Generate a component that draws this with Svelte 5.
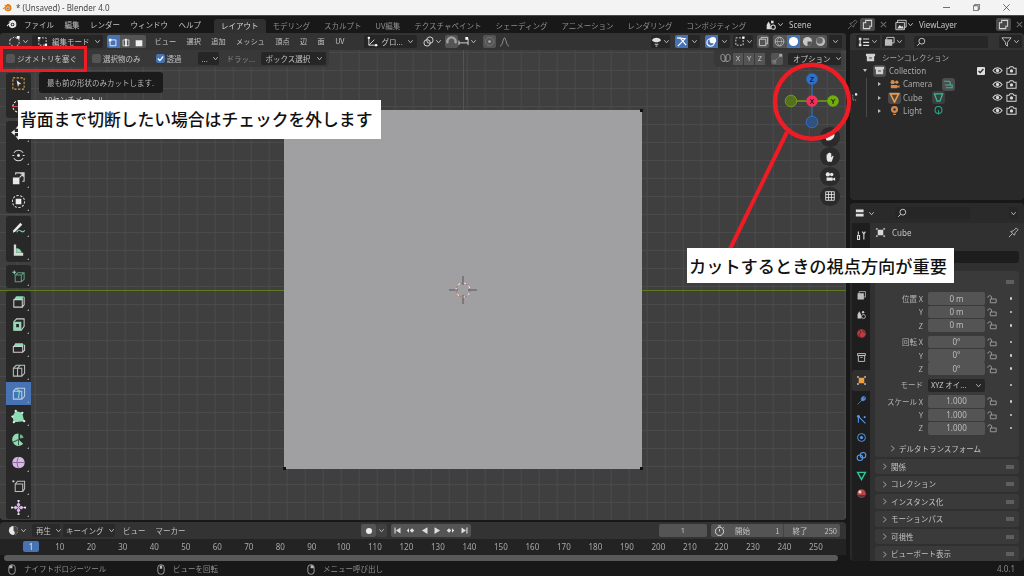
<script>
    const menus = ["ファイル", "編集", "レンダー", "ウィンドウ", "ヘルプ"];
    const tabs = ["レイアウト", "モデリング", "スカルプト", "UV編集", "テクスチャペイント", "シェーディング", "アニメーション", "レンダリング", "コンポジティング"];
    const viewMenus = ["ビュー", "選択", "追加", "メッシュ", "頂点", "辺", "面", "UV"];
    const mint = "#8fdcb4";
    const lilac = "#d9b8e6";

    // each tool is a few shapes on a 16x16 box
    const toolGroups = [
        [
            { shapes: [{ d: "M2 2h12v12H2z", s: "#d9a441", dash: true }, { d: "M6 4.500l5 4-2.500.3L7.500 12z", f: "#e8e8e8" }] },
            { shapes: [{ d: "M8 2a6 6 0 1 1-.01 0z", s: "#e8e8e8", dash: true }, { d: "M8 1v14M1 8h14", s: "#e24b4b" }] }
        ],
        [
            { shapes: [{ d: "M1 8h14M8 1v14M1 8l2.500-2v4zM15 8l-2.500-2v4zM8 1L6 3.500h4zM8 15l-2-2.500h4z", s: "#e8e8e8" }] },
            { shapes: [{ d: "M3 5a6 6 0 0 1 10 0M13 11a6 6 0 0 1-10 0", s: "#d0d0d0" }, { d: "M6.500 8a1.500 1.500 0 1 0 3 0 1.500 1.500 0 1 0-3 0", f: "#e8e8e8" }, { d: "M1.500 8h2M12.500 8h2", s: "#e8e8e8" }] },
            { shapes: [{ d: "M2 7h7v7H2z", f: "#e8e8e8" }, { d: "M5 4V2h9v9h-2M9 7l4-4M10 3h3v3", s: "#d0d0d0" }] },
            { shapes: [{ d: "M8 1.500a6.500 6.500 0 1 0 .01 0z", s: "#cfcfcf", dash: true }, { d: "M5 5h6v6H5z", f: "#eeeeee" }] }
        ],
        [
            { shapes: [{ d: "M2.500 11L10 3l2 2-7.500 7.500-2.500 1z", f: "#e8e8e8" }, { d: "M6 13c2-3 3.500-2 5-1s2.500 1 3.500-1", s: mint }] },
            { shapes: [{ d: "M3 1.500h2.500v9H13v3H3z", f: "#d8d8d8" }, { d: "M5.500 5.500a6 6 0 0 1 6 5h-6z", f: mint }] }
        ],
        [{ shapes: [{ d: "M1.500 3.500h4M3.500 1.500v4", s: mint }, { d: "M4.500 6.500l3-2.500h6.500v7l-3 2.500H4.500zM4.500 6.500h6.500v7M11 6.500l3-2.500", s: "#5f9c80" }] }],
        [
            { shapes: [{ d: "M3 6l2.500-3.500h8L12 6z", f: mint }, { d: "M3 6h9v8H3z", s: "#d0d0d0" }, { d: "M12 14l2-2.500V3", s: "#d0d0d0" }] },
            { shapes: [{ d: "M3 5l3-3h8v8l-3 4H3z", s: "#d0d0d0" }, { d: "M3 5h8v9H3z", f: mint }, { d: "M5.500 7.500h3v3.500h-3z", f: "#2b2b2b" }] },
            { shapes: [{ d: "M2.500 7l2-3.500h8l1 1.500-1 2.500z", f: mint }, { d: "M2.500 7h10v6h-10zM12.500 13l2-2V5", s: "#d0d0d0" }] },
            { shapes: [{ d: "M2.500 5.500h9v8.500h-9zM2.500 5.500l3-3h9v8.500l-3 3", s: "#bdbdbd" }, { d: "M7 5.500v8.500M7 5.500l3-3", s: mint }] },
            { active: true, shapes: [{ d: "M2.500 5.500h9v8.500h-9zM2.500 5.500l3-3h9v8.500l-3 3", s: "#b9cde8" }, { d: "M6 3.500l3 1.500-1 8", s: "#7fe6c0" }] },
            { shapes: [{ d: "M5 2l7 2 2 9-11 1-1.500-6z", f: mint }, { d: "M5 2h.1M12 4h.1M14 13h.1M3 14h.1M1.500 8h.1", s: "#e8e8e8", wide: true }] },
            { shapes: [{ d: "M8 8V1.500a6.500 6.500 0 0 0-6 9.500 6.500 6.500 0 0 0 11 1.500z", f: mint }, { d: "M9.500 2.500a5 5 0 0 1 4 3.500l-4 1z", f: "#6fb592" }, { d: "M8 8L2 11M8 8v6", s: "#3b5c4c" }] },
            { shapes: [{ d: "M8 2c4 0 6.500 2 6.500 6s-2.500 6-6.500 6-6.500-2-6.500-6S4 2 8 2z", f: lilac }, { d: "M1.500 8h13M8 2c-2 4-2 8 0 12", s: "#8e6f9c" }] },
            { shapes: [{ d: "M4.500 6.500h8v8h-8zM4.500 6.500l2.500-3h7.500v8l-2 3", s: "#bdbdbd" }, { d: "M2.500 3.500h.1", s: lilac, wide: true }] },
            { shapes: [{ d: "M8 2l2 3-2 3 2 3-2 3-2-3 2-3-2-3zM2 8l3-2 3 2 3-2 3 2-3 2-3-2-3 2z", f: lilac }, { d: "M8 1h.1M8 15h.1M1 8h.1M15 8h.1", s: "#e8e8e8", wide: true }] }
        ]
    ];

    const ruler = [10, 20, 30, 40, 50, 60, 70, 80, 90, 100, 110, 120, 130, 140, 150, 160, 170, 180, 190, 200, 210, 220, 230, 240, 250];
    const frameX = (f) => 31.5 + (f - 1) * 3.15;

    const transformGroups = [
        [["位置 X", "0 m"], ["Y", "0 m"], ["Z", "0 m"]],
        [["回転 X", "0°"], ["Y", "0°"], ["Z", "0°"]]
    ];
    const scaleRows = [["スケール X", "1.000"], ["Y", "1.000"], ["Z", "1.000"]];
    const closedPanels = ["関係", "コレクション", "インスタンス化", "モーションパス", "可視性", "ビューポート表示"];
</script>

{#snippet chev()}
    <svg class="chev" viewBox="0 0 8 8"><path d="M1.500 2.500L4 5.500l2.500-3" fill="none" stroke="currentColor" stroke-width="1.100" /></svg>
{/snippet}
{#snippet eye()}
    <svg class="rowicon" viewBox="0 0 12 12"><path d="M1 6c2.500-4 7.500-4 10 0-2.500 4-7.500 4-10 0z" fill="none" stroke="#d8d8d8" stroke-width="1.100" /><circle cx="6" cy="6" r="1.800" fill="#d8d8d8" /></svg>
{/snippet}
{#snippet cam()}
    <svg class="rowicon" viewBox="0 0 12 12"><path d="M1 3.500h2.500l1-1.500h3l1 1.500H11V10H1z" fill="none" stroke="#d8d8d8" stroke-width="1.100" /><circle cx="6" cy="6.500" r="1.800" fill="#d8d8d8" /></svg>
{/snippet}
{#snippet lock()}
    <svg class="lock" viewBox="0 0 12 12"><path d="M1 4.500a2.300 2.300 0 0 1 4.500-.8V6" fill="none" stroke="#a8a8a8" /><path d="M4 6h7v4.500H4z" fill="none" stroke="#a8a8a8" /></svg>
{/snippet}
{#snippet outlinerIcon()}
    <svg class="ico14" viewBox="0 0 14 14"><path d="M1 2h3v3H1zM1 9h3v3H1z" fill="#e0e0e0" /><path d="M2.500 5v5.500M6 3.500h7M6 7.500h7M6 11h7" stroke="#e0e0e0" fill="none" stroke-width="1.300" /></svg>
{/snippet}
{#snippet copyIcon()}
    <svg class="ico12" viewBox="0 0 12 12"><path d="M4 1.500h6.500V8H8.500V10.500H1.500V4H4z" fill="none" stroke="#d8d8d8" stroke-width="1.100" /></svg>
{/snippet}
{#snippet crossIcon()}
    <svg class="ico10" viewBox="0 0 10 10"><path d="M2 2l6 6M8 2l-6 6" stroke="#6a6a6a" stroke-width="1.200" /></svg>
{/snippet}

<div class="screen">
    <div class="titlebar">
        <svg class="logo-small" viewBox="0 0 16 16"><path d="M1 9l5-4-3-.2 6-3.300c3-.5 6 2 6 5.500a5.500 5.500 0 0 1-11 1.500L2 10z" fill="#e87d0d" /><circle cx="9.500" cy="8" r="2.500" fill="#fff" /><circle cx="9.500" cy="8" r="1.400" fill="#265787" /></svg>
        <span class="wintitle">* (Unsaved) - Blender 4.0</span>
        <div class="winbtns">
            <svg viewBox="0 0 10 10"><path d="M0 5h10" stroke="#333" /></svg>
            <svg viewBox="0 0 10 10"><path d="M.5 2.500h7v7h-7zM2.500 2.500v-2h7v7h-2" fill="none" stroke="#333" /></svg>
            <svg viewBox="0 0 10 10"><path d="M.5 .5l9 9M9.500 .5l-9 9" stroke="#333" /></svg>
        </div>
    </div>

    <div class="topbar">
        <svg class="logo" viewBox="0 0 16 16"><path d="M1 9.500l5-4.500-3-.1 6-3.400c3-.5 6 2 6 5.500a5.500 5.500 0 0 1-11 1.500L2 11z" fill="#e8e8e8" /><circle cx="9.500" cy="8" r="2.600" fill="#181818" /><circle cx="9.500" cy="8" r="1.400" fill="#e8e8e8" /></svg>
        <div class="menus">
            {#each menus as m}<span>{m}</span>{/each}
        </div>
        <div class="tabs">
            {#each tabs as t, i}<span class="tab" class:on={i === 0}>{t}</span>{/each}
        </div>
        <div class="scene">
            <svg class="ico14" viewBox="0 0 14 14"><path d="M2 12V7l2-4 2 3 1 6z" fill="#dcdcdc" /><circle cx="9.500" cy="9.500" r="2.500" fill="none" stroke="#dcdcdc" stroke-width="1.200" /><path d="M7 2h3v3H7z" fill="#dcdcdc" /></svg>
            {@render chev()}
            <span class="scene-name">Scene</span>
            <svg class="ico12 pin" viewBox="0 0 12 12"><path d="M1 11l3.500-3.500M3 5l4 4 1-3 3-3-2-2-3 3z" fill="none" stroke="#777" /></svg>
            <span class="copybtn">{@render copyIcon()}</span>
            {@render crossIcon()}
        </div>
        <div class="scene layer">
            <svg class="ico14" viewBox="0 0 14 14"><path d="M3 1.500h10v8H3z" fill="none" stroke="#dcdcdc" /><path d="M1 4h10v8.500H1z" fill="#2a2a2a" stroke="#dcdcdc" /><path d="M2.500 11l3-4 2 2 1-1 2 3z" fill="#dcdcdc" /></svg>
            {@render chev()}
            <span class="scene-name">ViewLayer</span>
            <span class="copybtn">{@render copyIcon()}</span>
            {@render crossIcon()}
        </div>
    </div>

    <div class="workspace">
        <div class="leftcol">
            <div class="viewport">
                <div class="vhead">
                    <span class="vbtn modeicon">
                        <svg class="ico14" viewBox="0 0 14 14"><path d="M2 5l5-3 5 3v5l-5 3-5-3z" fill="none" stroke="#ddd" stroke-dasharray="2 1.500" /><path d="M9.500 1h3v3h-3z" fill="#fff" /></svg>
                        {@render chev()}
                    </span>
                    <span class="drop modesel">
                        <svg class="ico12" viewBox="0 0 12 12"><path d="M2 2h8v8H2z" fill="none" stroke="#ddd" stroke-dasharray="2 1.500" /><path d="M1 1h2.500v2.500H1zM8.500 8.500H11V11H8.500z" fill="#fff" /></svg>
                        <span class="grow">編集モード</span>{@render chev()}
                    </span>
                    <span class="selmode">
                        <span class="sm on"><svg viewBox="0 0 12 12"><path d="M2.500 3.500h7v7h-7z" fill="none" stroke="#fff" /><path d="M1 2h3v3H1z" fill="#fff" /></svg></span>
                        <span class="sm"><svg viewBox="0 0 12 12"><path d="M2.500 3.500h7v7h-7z" fill="none" stroke="#ddd" /><path d="M6 2v9" stroke="#fff" stroke-width="2" /></svg></span>
                        <span class="sm"><svg viewBox="0 0 12 12"><path d="M2 4h8v7H2z" fill="#eee" /></svg></span>
                    </span>
                    <div class="vmenus">
                        {#each viewMenus as m}<span>{m}</span>{/each}
                    </div>
                    <span class="drop orient">
                        <svg class="ico12" viewBox="0 0 12 12"><path d="M2 1v9h9M2 10l6-6" fill="none" stroke="#ddd" /><circle cx="2" cy="2" r="1.300" fill="#fff" /><circle cx="10" cy="10" r="1.300" fill="#fff" /></svg>
                        <span class="grow">グロ...</span>{@render chev()}
                    </span>
                    <span class="plain pivot">
                        <svg class="ico12" viewBox="0 0 12 12"><circle cx="7.500" cy="4.500" r="3.500" fill="none" stroke="#ddd" /><circle cx="4.500" cy="7.500" r="3.500" fill="none" stroke="#ddd" /></svg>
                        {@render chev()}
                    </span>
                    <span class="greybox snap">
                        <svg class="ico12" viewBox="0 0 12 12"><path d="M2 8a4.500 4.500 0 1 1 8 0" fill="none" stroke="#a0a0a0" stroke-width="2.500" /></svg>
                    </span>
                    <span class="plain snapdrop">
                        <svg class="ico12" viewBox="0 0 12 12"><path d="M1 5v5M11 3v7M1 7.500h10" fill="none" stroke="#ddd" /><path d="M8 1h3v3H8z" fill="#fff" /></svg>
                        {@render chev()}
                    </span>
                    <span class="greybox prop">
                        <svg class="ico12" viewBox="0 0 12 12"><circle cx="6" cy="6" r="4.500" fill="none" stroke="#777" /><circle cx="6" cy="6" r="1.500" fill="#aaa" /></svg>
                    </span>
                    <span class="plain falloff">
                        <svg class="ico12" viewBox="0 0 12 12"><path d="M1 11c3 0 3.500-9 5-9s2 9 5 9" fill="none" stroke="#999" /></svg>
                    </span>

                    <div class="vright">
                        <span class="plain vis">
                            <svg class="ico12" viewBox="0 0 12 12"><path d="M1 4.500c2.500-3.500 7.500-3.500 10 0-2.500 3-7.500 3-10 0z" fill="#e0e0e0" /><path d="M4 9h4M5 11h2" stroke="#e0e0e0" /></svg>
                            {@render chev()}
                        </span>
                        <span class="bluebtn"><svg class="ico12" viewBox="0 0 12 12"><path d="M1 2l9 1-8 8M4 1.500L11 10" fill="none" stroke="#fff" stroke-width="1.200" /></svg></span>
                        <span class="plain narrow">{@render chev()}</span>
                        <span class="bluebtn over"><svg class="ico12" viewBox="0 0 12 12"><circle cx="5" cy="7" r="4" fill="none" stroke="#fff" stroke-width="1.300" /><circle cx="7.500" cy="4.500" r="3.500" fill="#fff" /></svg></span>
                        <span class="plain narrow">{@render chev()}</span>
                        <span class="plain meshsel">
                            <svg class="ico12" viewBox="0 0 12 12"><path d="M2 2h8v8H2z" fill="none" stroke="#ddd" stroke-dasharray="2 1.500" /><path d="M9 .5h2.500V3H9z" fill="#fff" /></svg>
                            {@render chev()}
                        </span>
                        <span class="greybox xray"><svg class="ico12" viewBox="0 0 12 12"><path d="M1.500 3.500h7v7h-7zM3.500 3.500v-2h7v7h-2" fill="none" stroke="#ccc" /></svg></span>
                        <span class="shading">
                            <svg viewBox="0 0 12 12"><circle cx="6" cy="6" r="4.800" fill="none" stroke="#bbb" /><path d="M1 6h10M6 1c-3 3-3 7 0 10M6 1c3 3 3 7 0 10" fill="none" stroke="#bbb" stroke-width=".7" /></svg>
                            <span class="shade-on"><svg viewBox="0 0 12 12"><circle cx="6" cy="6" r="5" fill="#fff" /></svg></span>
                            <svg viewBox="0 0 12 12"><circle cx="6" cy="6" r="5" fill="#c8c8c8" /><path d="M6 6h5a5 5 0 0 1-5 5z" fill="#555" /></svg>
                            <svg viewBox="0 0 12 12"><circle cx="6" cy="6" r="5" fill="#bbb" /><circle cx="5" cy="5" r="3.500" fill="#666" /></svg>
                        </span>
                        <span class="plain narrow shade-drop">{@render chev()}</span>
                    </div>
                </div>

                <div class="vtool">
                    <span class="check"></span><span class="optlabel">ジオメトリを塞ぐ</span>
                    <span class="check second"></span><span class="optlabel">選択物のみ</span>
                    <span class="check third on"><svg viewBox="0 0 10 10"><path d="M2 5l2.300 2.300L8 2.800" fill="none" stroke="#fff" stroke-width="1.400" /></svg></span><span class="optlabel">透過</span>
                    <span class="drop dots"><span class="grow">...</span>{@render chev()}</span>
                    <span class="optlabel dim dragl">ドラッ...</span>
                    <span class="drop boxsel"><span class="grow">ボックス選択</span>{@render chev()}</span>
                    <div class="toolright">
                        <svg class="ico12" viewBox="0 0 12 12"><path d="M5.500 3C3 0 .5 2 1 5c-.5 2 1 5 4.500 4zM6.500 3c2.500-3 5-1 4.500 2 .5 2-1 5-4.500 4z" fill="none" stroke="#aaa" /></svg>
                        <span class="axes"><span>X</span><span>Y</span><span>Z</span></span>
                        <span class="greybox mirror"><svg class="ico12" viewBox="0 0 12 12"><path d="M2 10L10 2" stroke="#888" stroke-dasharray="2 1" /><path d="M1 8h3v3H1z" fill="none" stroke="#888" /><path d="M8 1h3v3H8z" fill="#aaa" /></svg></span>
                        <span class="drop options"><span class="grow">オプション</span>{@render chev()}</span>
                    </div>
                </div>

                <div class="canvas">
                    <div class="axis-blue"></div>
                    <div class="axis-green"></div>
                    <div class="square">
                        <i class="corner tl"></i><i class="corner tr"></i><i class="corner bl"></i><i class="corner br"></i>
                        <svg class="cursor3d" viewBox="0 0 30 30">
                            <circle cx="15" cy="15" r="7" fill="none" stroke="#d6654f" stroke-dasharray="3 3" />
                            <circle cx="15" cy="15" r="7" fill="none" stroke="#eee" stroke-dasharray="3 3" stroke-dashoffset="3" />
                            <path d="M15 1v9M15 20v9M1 15h9M20 15h9" stroke="#555" />
                        </svg>
                    </div>

                    <span class="toolhint">10センチメートル</span>

                    <div class="tools">
                        {#each toolGroups as group}
                            <div class="toolgroup">
                                {#each group as t}
                                    <div class="tool" class:active={t.active}>
                                        <svg viewBox="0 0 16 16">
                                            {#each t.shapes as p}
                                                <path
                                                    d={p.d}
                                                    fill={p.f ?? "none"}
                                                    stroke={p.s ?? "none"}
                                                    stroke-width={p.wide ? 2.4 : 1.1}
                                                    stroke-linecap={p.wide ? "round" : "butt"}
                                                    stroke-dasharray={p.dash ? "2.500 1.500" : null}
                                                />
                                            {/each}
                                        </svg>
                                        <i class="tri"></i>
                                    </div>
                                {/each}
                            </div>
                        {/each}
                    </div>

                    <svg class="gizmo" viewBox="0 0 70 70">
                        <path d="M35 12v46" stroke="#2e6fc0" stroke-width="1.300" />
                        <path d="M14 34h42" stroke="#6ea312" stroke-width="1.300" />
                        <circle cx="35" cy="12" r="5.800" fill="#2a70cc" />
                        <text x="35" y="14.600" class="gz">Z</text>
                        <circle cx="14" cy="34" r="5.800" fill="#55701f" stroke="#6f9a1c" />
                        <circle cx="56" cy="34" r="5.800" fill="#72ae0b" />
                        <text x="56" y="36.600" class="gz">Y</text>
                        <circle cx="35" cy="55" r="5.800" fill="#2f5282" stroke="#2e6fc0" />
                        <circle cx="35" cy="34" r="5.800" fill="#f2305c" />
                        <text x="35" y="36.600" class="gz">X</text>
                    </svg>

                    <div class="navbtns">
                        <span class="nav"><svg viewBox="0 0 14 14"><path d="M2 9c0-4 3-7 7-7 3 0 4 2 3 4-1 3-5 6-9 5z" fill="#e8e8e8" /></svg></span>
                        <span class="nav"><svg viewBox="0 0 14 14"><path d="M3 7V4.500c0-1 1.300-1 1.300 0V3c0-1 1.400-1 1.400 0v-.5c0-1 1.400-1 1.400 0V3c0-1 1.400-1 1.400 0v4.500l1.200-1.500c.8-.8 1.800 0 1.200 1L9 12.500H5C3.500 12 3 10 3 7z" fill="#e8e8e8" /></svg></span>
                        <span class="nav"><svg viewBox="0 0 14 14"><circle cx="4.500" cy="4" r="2.500" fill="#e8e8e8" /><circle cx="9" cy="4" r="2" fill="#e8e8e8" /><path d="M3 7.500h7v4H3zM10 9l3-1.500v4L10 10z" fill="#e8e8e8" /></svg></span>
                        <span class="nav"><svg viewBox="0 0 14 14"><path d="M2 2h10v10H2zM5.300 2v10M8.700 2v10M2 5.300h10M2 8.700h10" fill="none" stroke="#e8e8e8" /></svg></span>
                    </div>
                </div>
            </div>

            <div class="timeline">
                <div class="thead">
                    <span class="plain clock">
                        <svg class="ico12" viewBox="0 0 12 12"><circle cx="6" cy="6" r="5" fill="#e8e8e8" /><path d="M6 1a5 5 0 0 1 0 10c2-2 2-3 0-5z" fill="#444" /></svg>
                        {@render chev()}
                    </span>
                    <span class="drop play"><span class="grow">再生</span>{@render chev()}</span>
                    <span class="drop keying"><span class="grow">キーイング</span>{@render chev()}</span>
                    <span class="tmenu">ビュー</span>
                    <span class="tmenu">マーカー</span>
                    <span class="greybox rec"><svg viewBox="0 0 10 10"><circle cx="5" cy="5" r="3" fill="#eee" /></svg></span>
                    <span class="greybox recdrop">{@render chev()}</span>
                    <div class="transport">
                        <svg viewBox="0 0 12 12"><path d="M2 2h1.500v8H2zM10 2v8L4 6z" fill="#ddd" /></svg>
                        <svg viewBox="0 0 12 12"><path d="M1 6l3-3v6zM5 6l3-3 3 3-3 3z" fill="#ddd" /></svg>
                        <svg viewBox="0 0 12 12"><path d="M10 1.500v9L2.500 6z" fill="#ddd" /></svg>
                        <svg viewBox="0 0 12 12"><path d="M2 1.500v9L9.500 6z" fill="#ddd" /></svg>
                        <svg viewBox="0 0 12 12"><path d="M1 6l3-3 3 3-3 3zM8 3l3 3-3 3z" fill="#ddd" /></svg>
                        <svg viewBox="0 0 12 12"><path d="M2 2v8l6-4zM8.500 2H10v8H8.500z" fill="#ddd" /></svg>
                    </div>
                    <span class="field curframe">1</span>
                    <div class="range">
                        <svg class="ico12" viewBox="0 0 12 12"><circle cx="6" cy="7" r="4.500" fill="none" stroke="#ddd" /><path d="M6 7V4.500M4.500 1h3M10 2.500l1 1" stroke="#ddd" fill="none" /></svg>
                        <span class="rangecell"><span>開始</span><span>1</span></span>
                        <span class="rangecell"><span>終了</span><span>250</span></span>
                    </div>
                </div>
                <div class="ruler">
                    <span class="playhead">1</span>
                    {#each ruler as f}
                        <span class="tick" style:left="{frameX(f)}px">{f}</span>
                    {/each}
                </div>
                <div class="scrollbar"></div>
            </div>
        </div>

        <div class="rightcol">
            <div class="outliner">
                <div class="ohead">
                    <span class="plain">{@render outlinerIcon()}{@render chev()}</span>
                    <span class="plain">
                        <svg class="ico12" viewBox="0 0 12 12"><path d="M3 1.500h8v6H3z" fill="none" stroke="#ccc" /><path d="M1 3.500h8v7H1z" fill="#bbb" /></svg>
                        {@render chev()}
                    </span>
                    <span class="search osearch">
                        <svg viewBox="0 0 12 12"><circle cx="7" cy="5" r="3.500" fill="none" stroke="#ccc" stroke-width="1.100" /><path d="M4.500 7.500L1.500 10.500" stroke="#ccc" stroke-width="1.200" /></svg>
                    </span>
                    <span class="plain filter">
                        <svg class="ico12" viewBox="0 0 12 12"><path d="M1 2h10L7 7v4L5 9.500V7z" fill="none" stroke="#ccc" /></svg>
                        {@render chev()}
                    </span>
                </div>
                <div class="tree">
                    <div class="row scenecol">
                        <svg class="ico12" viewBox="0 0 12 12"><path d="M1 2h10v2.500H1zM2 4.500h8V10H2z" fill="#d0d0d0" /><path d="M4.500 6.500h3" stroke="#333" /></svg>
                        <span>シーンコレクション</span>
                    </div>
                    <div class="row collection">
                        <i class="arrow down"></i>
                        <span class="iconbox"><svg class="ico12" viewBox="0 0 12 12"><path d="M1 2h10v2.500H1zM2 4.500h8V10H2z" fill="#d0d0d0" /><path d="M4.500 6.500h3" stroke="#333" /></svg></span>
                        <span class="name">Collection</span>
                        <span class="rowcheck"><svg viewBox="0 0 10 10"><path d="M2 5l2 2 4-4.500" fill="none" stroke="#222" stroke-width="1.500" /></svg></span>
                        {@render eye()}{@render cam()}
                    </div>
                    <div class="rows-child">
                        <div class="row obj">
                            <i class="arrow"></i>
                            <svg class="ico12" viewBox="0 0 12 12"><circle cx="4" cy="3.500" r="2.300" fill="#d68a4a" /><circle cx="8.500" cy="3.500" r="1.800" fill="#d68a4a" /><path d="M2 6.500h7v3.500H2zM9 8l2.500-1.500v3L9 9z" fill="#d68a4a" /></svg>
                            <span class="name">Camera</span>
                            <span class="databox camdata"><svg class="ico12" viewBox="0 0 12 12"><path d="M1 2.500h5a2 2 0 0 1 0 4H2M6 6.500h4v3H3" fill="none" stroke="#3fb39a" stroke-width="1.200" /></svg></span>
                            {@render eye()}{@render cam()}
                        </div>
                        <div class="row obj">
                            <i class="arrow"></i>
                            <span class="iconbox small"><svg class="ico12" viewBox="0 0 12 12"><path d="M1.500 2h9L6 11z" fill="none" stroke="#e89a4a" stroke-width="1.800" /></svg></span>
                            <span class="name cube">Cube</span>
                            <span class="databox cubedata"><svg class="ico12" viewBox="0 0 12 12"><path d="M1.500 2h9L7.500 10h-3z" fill="none" stroke="#33bb99" stroke-width="1.400" /></svg></span>
                            {@render eye()}{@render cam()}
                        </div>
                        <div class="row obj">
                            <i class="arrow"></i>
                            <svg class="ico12" viewBox="0 0 12 12"><circle cx="6" cy="5" r="3.800" fill="#d68a4a" /><path d="M4.500 9.500h3v1.500h-3z" fill="#d68a4a" /><circle cx="6" cy="5" r="1.400" fill="#333" /></svg>
                            <span class="name">Light</span>
                            <span class="databox lightdata"><svg class="ico12" viewBox="0 0 12 12"><circle cx="6" cy="5.500" r="3.800" fill="none" stroke="#2fa68c" stroke-width="1.100" /><path d="M6 5.500v5" stroke="#2fa68c" /></svg></span>
                            {@render eye()}{@render cam()}
                        </div>
                    </div>
                </div>
            </div>

            <div class="props">
                <div class="phead">
                    <span class="plain">
                        <svg class="ico14" viewBox="0 0 14 14"><path d="M1 3h9v3H1zM1 8h9v3H1z" fill="#e0e0e0" /></svg>
                        {@render chev()}
                    </span>
                    <span class="search psearch">
                        <svg viewBox="0 0 12 12"><circle cx="7" cy="5" r="3.500" fill="none" stroke="#ccc" stroke-width="1.100" /><path d="M4.500 7.500L1.500 10.500" stroke="#ccc" stroke-width="1.200" /></svg>
                    </span>
                    <span class="plain pdrop">{@render chev()}</span>
                </div>
                <div class="pbody">
                    <div class="ptabs">
                        <span class="ptab t-tool"><svg viewBox="0 0 14 14"><path d="M3 2v4M2 7h2.500v5H2zM8 2l2 3 2-3M10 5v7" fill="none" stroke="#d8d8d8" stroke-width="1.400" /></svg></span>
                        <span class="ptab t-render"></span>
                        <span class="ptab t-out"></span>
                        <span class="ptab t-vl"><svg viewBox="0 0 14 14"><path d="M4 2h8v7H4z" fill="none" stroke="#bbb" /><path d="M2 4h8v8H2z" fill="#bbb" /></svg></span>
                        <span class="ptab"><svg viewBox="0 0 14 14"><path d="M2 12V7l2-4 2 3 1 6z" fill="#c8c8c8" /><circle cx="9.500" cy="9.500" r="2.500" fill="none" stroke="#c8c8c8" /><circle cx="9" cy="4" r="1.500" fill="#c8c8c8" /></svg></span>
                        <span class="ptab"><svg viewBox="0 0 14 14"><circle cx="7" cy="7" r="5.500" fill="#bb3a44" /><path d="M4 3c2 1 3 2 1 4s-1 4 1 5M9 2c-1 2 0 3 3 4" fill="none" stroke="#3a2a2a" /></svg></span>
                        <span class="ptab t-coll"><svg viewBox="0 0 14 14"><path d="M2 2h10v2.500H2zM3 4.500h8V12H3z" fill="none" stroke="#ccc" stroke-width="1.100" /><path d="M5.500 7h3" stroke="#ccc" /></svg></span>
                        <span class="ptab t-obj"><svg viewBox="0 0 14 14"><path d="M3.500 3.500h7v7h-7z" fill="#f0a040" /><path d="M1.500 1.500h2v2h-2zM10.500 1.500h2v2h-2zM1.500 10.500h2v2h-2zM10.500 10.500h2v2h-2z" fill="#ddd" /></svg></span>
                        <span class="ptab"><svg viewBox="0 0 14 14"><path d="M2 12l5-5a3.500 3.500 0 0 1 4-5L9 4l1 1 2-2a3.500 3.500 0 0 1-5 4" fill="#4f8fe0" stroke="#4f8fe0" /></svg></span>
                        <span class="ptab"><svg viewBox="0 0 14 14"><path d="M3 3l9 9M3 3v8" stroke="#5b9be8" stroke-width="1.300" /><circle cx="3" cy="3" r="1.700" fill="#5b9be8" /><circle cx="11" cy="4" r="1.300" fill="#5b9be8" /></svg></span>
                        <span class="ptab"><svg viewBox="0 0 14 14"><circle cx="7" cy="7" r="5" fill="none" stroke="#5b9be8" stroke-width="1.200" /><circle cx="7" cy="7" r="2" fill="#5b9be8" /></svg></span>
                        <span class="ptab"><svg viewBox="0 0 14 14"><circle cx="5" cy="8.500" r="3.500" fill="none" stroke="#5b9be8" stroke-width="1.400" /><circle cx="9" cy="5.500" r="3.500" fill="none" stroke="#5b9be8" stroke-width="1.400" /></svg></span>
                        <span class="ptab"><svg viewBox="0 0 14 14"><path d="M2 3h10L7 12z" fill="none" stroke="#2fc49a" stroke-width="1.800" /></svg></span>
                        <span class="ptab"><svg viewBox="0 0 14 14"><circle cx="7" cy="7" r="5.500" fill="#b8444a" /><circle cx="5" cy="5" r="2" fill="#ddb" /><path d="M2 9a6 6 0 0 0 10 0z" fill="#4a3a3a" /></svg></span>
                    </div>
                    <div class="pmain">
                        <div class="crumb">
                            <svg class="ico12" viewBox="0 0 12 12"><path d="M3 3h6v6H3z" fill="#d8d8d8" /><path d="M1 1h2v2H1zM9 1h2v2H9zM1 9h2v2H1zM9 9h2v2H9z" fill="#aaa" /></svg>
                            <span>Cube</span>
                            <svg class="ico12 crumbpin" viewBox="0 0 12 12"><path d="M1 11l3.500-3.500M3 5l4 4 1-3 3-3-2-2-3 3z" fill="none" stroke="#bbb" /></svg>
                        </div>
                        <div class="namefield"></div>
                        <div class="panel open">
                            <div class="grip-row"><i class="grip"></i></div>
                            {#each transformGroups as g}
                                <div class="fgroup">
                                    {#each g as [label, val]}
                                        <div class="frow">
                                            <span class="flabel">{label}</span>
                                            <span class="field">{val}</span>
                                            {@render lock()}
                                            <i class="dot"></i>
                                        </div>
                                    {/each}
                                </div>
                            {/each}
                            <div class="fgroup">
                                <div class="frow">
                                    <span class="flabel">モード</span>
                                    <span class="drop rotmode"><span class="grow">XYZ オイ...</span>{@render chev()}</span>
                                    <span class="lockgap"></span>
                                    <i class="dot"></i>
                                </div>
                            </div>
                            <div class="fgroup">
                                {#each scaleRows as [label, val]}
                                    <div class="frow">
                                        <span class="flabel">{label}</span>
                                        <span class="field">{val}</span>
                                        {@render lock()}
                                        <i class="dot"></i>
                                    </div>
                                {/each}
                            </div>
                            <div class="delta">
                                <svg class="pchev" viewBox="0 0 8 8"><path d="M2.500 1L6 4 2.500 7" fill="none" stroke="#b0b0b0" /></svg>
                                <span>デルタトランスフォーム</span>
                            </div>
                        </div>
                        {#each closedPanels as p}
                            <div class="panel closed">
                                <svg class="pchev" viewBox="0 0 8 8"><path d="M2.500 1L6 4 2.500 7" fill="none" stroke="#b0b0b0" /></svg>
                                <span class="grow">{p}</span>
                                <i class="grip"></i>
                            </div>
                        {/each}
                    </div>
                </div>
            </div>
        </div>
    </div>

    <div class="status">
        <span class="hint first">
            <svg viewBox="0 0 10 14"><rect x="1" y="1" width="8" height="12" rx="3.500" fill="none" stroke="#bdbdbd" /><path d="M1.500 5.500h4V1.500H4a3 3 0 0 0-2.500 3z" fill="#bdbdbd" /></svg>
            ナイフトポロジーツール
        </span>
        <span class="hint second">
            <svg viewBox="0 0 10 14"><rect x="1" y="1" width="8" height="12" rx="3.500" fill="none" stroke="#bdbdbd" /><path d="M3.500 2h3v4h-3z" fill="#bdbdbd" /></svg>
            ビューを回転
        </span>
        <span class="hint third">
            <svg viewBox="0 0 10 14"><rect x="1" y="1" width="8" height="12" rx="3.500" fill="none" stroke="#bdbdbd" /><path d="M8.500 5.500h-4V1.500H6a3 3 0 0 1 2.500 3z" fill="#bdbdbd" /></svg>
            メニュー呼び出し
        </span>
        <span class="version">4.0.1</span>
    </div>

    <!-- tooltip and the annotations drawn on top of the capture -->
    <div class="tooltip">最も前の形状のみカットします.</div>
    <svg class="side-arrow" viewBox="0 0 8 12"><path d="M1 3v7h5" fill="none" stroke="#bbb" stroke-dasharray="1.500 1" /><path d="M4 1h3v3H4z" fill="#eee" /></svg>
</div>

<div class="redbox"></div>
<div class="note note-a">背面まで切断したい場合はチェックを外します</div>
<svg class="redmarks" viewBox="0 0 1024 576">
    <circle cx="812" cy="101.700" r="37" fill="none" stroke="#ee1c25" stroke-width="4.500" />
    <path d="M787 132L730 249" stroke="#ee1c25" stroke-width="4" />
</svg>
<div class="note note-b">カットするときの視点方向が重要</div>

<style>
    :global(body) {
        background: #181818;
        overflow: hidden;
    }

    .screen {
        width: 1024px;
        height: 576px;
        display: flex;
        flex-direction: column;
        position: relative;
        overflow: hidden;
        background: #181818;
        color: #c4c4c4;
        font-family: "Noto Sans CJK JP", "Noto Sans", sans-serif;
        font-size: 7.5px;
        line-height: 1;
        filter: blur(0.35px);
    }

    svg {
        display: block;
        flex: none;
    }

    .ico14 { width: 14px; height: 14px; }
    .ico12 { width: 11px; height: 11px; }
    .ico10 { width: 9px; height: 9px; }
    .chev { width: 7px; height: 7px; color: #b8b8b8; }
    .grow { flex: 1; white-space: nowrap; }

    .titlebar {
        height: 15px;
        background: #f3f3f3;
        color: #444;
        display: flex;
        align-items: center;
        border-bottom: 1px solid #4a4a4a;
        flex: none;
    }
    .logo-small { width: 10px; height: 10px; margin-left: 2px; }
    .wintitle {
        margin-left: 4px;
        font-family: "Noto Sans", sans-serif;
        font-size: 8px;
    }
    .winbtns {
        margin-left: auto;
        display: flex;
        gap: 23px;
        margin-right: 14px;
    }
    .winbtns svg { width: 7px; height: 7px; }

    .topbar {
        height: 17px;
        flex: none;
        display: flex;
        align-items: center;
        background: #181818;
    }
    .logo { width: 11px; height: 11px; margin-left: 6px; }
    .menus {
        display: flex;
        gap: 10.500px;
        margin-left: 7px;
        width: 174px;
        flex: none;
        white-space: nowrap;
    }
    .tabs {
        display: flex;
        margin-left: 16px;
        height: 14px;
        align-self: flex-end;
        flex: none;
    }
    .tab {
        padding: 3px 7px 0;
        color: #8e8e8e;
        white-space: nowrap;
    }
    .tab.on {
        background: #303030;
        color: #d8d8d8;
        border-radius: 3px 3px 0 0;
    }
    .scene {
        margin-left: auto;
        width: 125px;
        height: 13px;
        display: flex;
        align-items: center;
        flex: none;
    }
    .scene-name {
        margin-left: 5px;
        font-family: "Noto Sans", sans-serif;
        font-size: 8px;
        flex: 1;
    }
    .scene .ico14 { width: 12px; height: 12px; margin-left: 2px; }
    .copybtn {
        background: #4a4a4a;
        width: 15px;
        height: 13px;
        display: flex;
        align-items: center;
        justify-content: center;
        border-radius: 2px;
        margin: 0 4px 0 2px;
    }
    .pin { opacity: .9; }
    .layer { margin-left: 5px; width: 131px; }

    .workspace {
        flex: 1;
        display: flex;
        min-height: 0;
        padding-right: 0;
    }
    .leftcol {
        width: 846px;
        display: flex;
        flex-direction: column;
        flex: none;
    }
    .viewport {
        height: 487px;
        display: flex;
        flex-direction: column;
        flex: none;
        border-radius: 4px;
        overflow: hidden;
        background-color: #3f3f3f;
    }
    .vhead {
        height: 17px;
        background: #333;
        display: flex;
        align-items: center;
        flex: none;
        position: relative;
    }
    .vbtn, .plain {
        display: flex;
        align-items: center;
        gap: 1px;
    }
    .modeicon { margin-left: 8px; }
    .modeicon .ico14 { width: 13px; height: 13px; }
    .drop {
        background: #262626;
        border-radius: 2px;
        height: 13px;
        display: flex;
        align-items: center;
        padding: 0 3px 0 5px;
        gap: 4px;
        flex: none;
        box-sizing: border-box;
    }
    .modesel { width: 71px; margin-left: 3px; }
    .selmode {
        display: flex;
        margin-left: 3.500px;
        width: 39px;
        height: 13px;
        flex: none;
    }
    .sm {
        flex: 1;
        background: #545454;
        display: flex;
        align-items: center;
        justify-content: center;
    }
    .sm.on { background: #4772b3; border-radius: 2px 0 0 2px; }
    .sm:last-child { border-radius: 0 2px 2px 0; }
    .sm svg { width: 10px; height: 10px; }
    .vmenus {
        display: flex;
        gap: 10.400px;
        margin-left: 9px;
        width: 209px;
        flex: none;
        white-space: nowrap;
        font-size: 7.200px;
    }
    .orient { width: 53px; padding-left: 3px; }
    .pivot { margin-left: 6px; width: 17px; }
    .greybox {
        background: #545454;
        border-radius: 2px;
        height: 13px;
        display: flex;
        align-items: center;
        justify-content: center;
        flex: none;
    }
    .snap { margin-left: 5px; width: 13px; }
    .snapdrop { width: 20px; }
    .prop { margin-left: 5px; width: 13px; }
    .falloff { margin-left: 3px; }
    .vright {
        position: absolute;
        right: 4px;
        top: 2px;
        display: flex;
        align-items: center;
        height: 13px;
    }
    .vis { width: 19px; background: #262626; height: 13px; border-radius: 2px; justify-content: center; }
    .bluebtn {
        width: 13px;
        height: 13px;
        background: #4772b3;
        display: flex;
        align-items: center;
        justify-content: center;
        margin-left: 5px;
        border-radius: 2px 0 0 2px;
    }
    .narrow {
        width: 12px;
        height: 13px;
        background: #262626;
        justify-content: center;
        border-radius: 0 2px 2px 0;
    }
    .meshsel { margin-left: 3px; width: 20px; justify-content: center; background: #262626; height: 13px; border-radius: 2px; }
    .xray { width: 12px; margin-left: 4px; }
    .shading {
        width: 54px;
        height: 13px;
        margin-left: 4px;
        background: #545454;
        border-radius: 2px;
        display: flex;
        align-items: center;
        justify-content: space-around;
    }
    .shading svg { width: 11px; height: 11px; }
    .shade-on {
        background: #4772b3;
        height: 13px;
        width: 13px;
        display: flex;
        align-items: center;
        justify-content: center;
    }
    .shade-drop { margin-left: 2px; border-radius: 2px; width: 13px; }

    .vtool {
        height: 17px;
        background: #383838;
        display: flex;
        align-items: center;
        flex: none;
        padding-left: 6px;
        width: 323px;
        box-sizing: content-box;
        border-radius: 0 0 4px 0;
        position: relative;
        white-space: nowrap;
        z-index: 1;
    }
    .check {
        width: 9px;
        height: 9px;
        background: #555;
        border-radius: 2px;
        flex: none;
        margin-right: 2px;
    }
    .check.second { margin-left: 15px; }
    .check.third { margin-left: 15px; }
    .check.on { background: #4772b3; }
    .check svg { width: 9px; height: 9px; }
    .optlabel { flex: none; }
    .dim { color: #888; }
    .dots { width: 21px; margin-left: 16px; padding-left: 4px; }
    .dragl { margin-left: 8px; width: 28px; }
    .boxsel { width: 65px; margin-left: 6px; }
    .toolright {
        position: absolute;
        left: 714px;
        top: 0;
        width: 127px;
        height: 17px;
        background: #383838;
        display: flex;
        align-items: center;
        padding-left: 6px;
        box-sizing: border-box;
        border-radius: 0 0 0 4px;
    }
    .axes {
        display: flex;
        margin-left: 2px;
        font-family: "Noto Sans", sans-serif;
    }
    .axes span {
        width: 11px;
        height: 12px;
        background: #545454;
        display: flex;
        align-items: center;
        justify-content: center;
        border-right: 1px solid #3a3a3a;
        box-sizing: border-box;
    }
    .mirror { width: 12px; margin-left: 5px; height: 12px; }
    .options { width: 53px; margin-left: 5px; height: 12px; }

    .canvas {
        flex: 1;
        position: relative;
        background-color: #3f3f3f;
        background-image:
            linear-gradient(#4a4a4a 1px, transparent 1px),
            linear-gradient(90deg, #4a4a4a 1px, transparent 1px);
        background-size: 18px 18px;
        background-position: -1.300px 2px;
        margin-top: -17px;
    }
    .axis-blue {
        position: absolute;
        left: 463px;
        top: 0;
        width: 1px;
        height: 60px;
        background: #2e5a8c;
    }
    .axis-green {
        position: absolute;
        left: 0;
        right: 0;
        top: 240px;
        height: 1px;
        background: #5d7a22;
    }
    .square {
        position: absolute;
        left: 284px;
        top: 60px;
        width: 358px;
        height: 359px;
        background: #a0a0a2;
    }
    .corner {
        position: absolute;
        width: 3px;
        height: 3px;
        background: #111;
    }
    .tl { left: -1px; top: -1px; }
    .tr { right: -1px; top: -1px; }
    .bl { left: -1px; bottom: -1px; }
    .br { right: -1px; bottom: -1px; }
    .cursor3d {
        position: absolute;
        left: 164px;
        top: 165px;
        width: 30px;
        height: 30px;
    }
    .toolhint {
        position: absolute;
        left: 44px;
        top: 46px;
        color: #ddd;
        font-size: 7.500px;
    }
    .tools {
        position: absolute;
        left: 6px;
        top: 22.500px;
        display: flex;
        flex-direction: column;
        gap: 3px;
    }
    .toolgroup {
        background: #282828;
        border-radius: 3px;
        width: 25px;
    }
    .tool {
        width: 25px;
        height: 22.900px;
        display: flex;
        align-items: center;
        justify-content: center;
        position: relative;
    }
    .tool svg { width: 15px; height: 15px; }
    .tool.active { background: #4772b3; }
    .tri {
        position: absolute;
        right: 2px;
        bottom: 2px;
        width: 0;
        height: 0;
        border-left: 2.500px solid transparent;
        border-bottom: 2.500px solid #9a9a9a;
    }
    .gizmo {
        position: absolute;
        left: 777px;
        top: 17px;
        width: 70px;
        height: 70px;
    }
    .gz {
        font: bold 7px "Liberation Sans", sans-serif;
        fill: #1c1c1c;
        text-anchor: middle;
    }
    .navbtns {
        position: absolute;
        left: 820px;
        top: 77px;
        display: flex;
        flex-direction: column;
        gap: 0.400px;
    }
    .nav {
        width: 19.500px;
        height: 19.500px;
        border-radius: 50%;
        background: #2b2b2b;
        display: flex;
        align-items: center;
        justify-content: center;
    }
    .nav svg { width: 12px; height: 12px; }
    .side-arrow {
        position: absolute;
        left: 852px;
        top: 92px;
        width: 6px;
        height: 10px;
    }

    .timeline {
        flex: 1;
        margin-top: 2px;
        display: flex;
        flex-direction: column;
        min-height: 0;
    }
    .thead {
        height: 17px;
        flex: none;
        background: #333;
        display: flex;
        align-items: center;
        border-radius: 4px 4px 0 0;
        position: relative;
    }
    .clock { margin-left: 8px; }
    .play { width: 28px; margin-left: 5px; background: #2a2a2a; padding-left: 4px; }
    .keying { width: 52px; margin-left: 3px; background: #2a2a2a; padding-left: 3px; }
    .tmenu { margin-left: 8px; margin-right: 2px; flex: none; }
    .rec { position: absolute; left: 361px; top: 2px; width: 15px; }
    .rec svg { width: 10px; height: 10px; }
    .recdrop { position: absolute; left: 376px; top: 2px; width: 11px; background: #404040; }
    .transport {
        position: absolute;
        left: 391px;
        top: 2px;
        height: 13px;
        width: 80px;
        background: #545454;
        border-radius: 2px;
        display: flex;
        align-items: center;
        justify-content: space-around;
    }
    .transport svg { width: 9px; height: 9px; }
    .field {
        background: #545454;
        border-radius: 2px;
        display: flex;
        align-items: center;
        justify-content: center;
        font-family: "Noto Sans", sans-serif;
    }
    .curframe {
        position: absolute;
        left: 659px;
        top: 2px;
        width: 48px;
        height: 13px;
    }
    .range {
        position: absolute;
        left: 711px;
        top: 2px;
        width: 129px;
        height: 13px;
        background: #545454;
        border-radius: 2px;
        display: flex;
        align-items: center;
        padding-left: 3px;
        box-sizing: border-box;
    }
    .rangecell {
        flex: 1;
        display: flex;
        justify-content: space-between;
        padding: 0 3px 0 10px;
        border-right: 1px solid #444;
        height: 13px;
        align-items: center;
    }
    .rangecell:last-child { border: 0; padding-left: 9px; }
    .ruler {
        height: 16px;
        flex: none;
        background: #232323;
        position: relative;
        font-family: "Noto Sans", sans-serif;
        font-size: 8px;
    }
    .tick {
        position: absolute;
        top: 4px;
        transform: translateX(-50%);
        color: #a8a8a8;
    }
    .playhead {
        position: absolute;
        left: 23px;
        top: 2px;
        width: 16px;
        height: 11px;
        background: #4772b3;
        border-radius: 2px;
        color: #e8e8e8;
        display: flex;
        align-items: center;
        justify-content: center;
    }
    .scrollbar {
        height: 6px;
        flex: none;
        margin-left: 4px;
        width: 834px;
        background: #595959;
        border-radius: 3px;
    }

    .rightcol {
        flex: 1;
        margin-left: 4px;
        display: flex;
        flex-direction: column;
        min-width: 0;
    }
    .outliner {
        height: 167px;
        flex: none;
        background: #292929;
        border-radius: 4px;
        overflow: hidden;
    }
    .ohead {
        height: 17px;
        background: #333;
        display: flex;
        align-items: center;
        padding-left: 6px;
    }
    .ohead .ico14 { width: 12px; height: 12px; }
    .ohead .plain {
        background: #262626;
        height: 13px;
        padding: 0 2px;
        border-radius: 2px;
        margin-right: 2px;
    }
    .search {
        background: #262626;
        height: 12px;
        border-radius: 2px;
        display: flex;
        align-items: center;
        padding-left: 2px;
        box-sizing: border-box;
    }
    .search svg { width: 10px; height: 10px; }
    .osearch { width: 77px; margin-left: 7px; }
    .filter { margin-left: 11px; }
    .tree { padding-top: 1px; }
    .row {
        height: 13.300px;
        display: flex;
        align-items: center;
        color: #a8a8a8;
        padding-right: 7px;
    }
    .scenecol { padding-left: 15px; gap: 6px; }
    .collection { padding-left: 13px; }
    .arrow {
        width: 0;
        height: 0;
        border-left: 3.500px solid #bbb;
        border-top: 2.500px solid transparent;
        border-bottom: 2.500px solid transparent;
        margin-right: 8px;
        flex: none;
    }
    .arrow.down {
        border-top: 3.500px solid #bbb;
        border-left: 2.500px solid transparent;
        border-right: 2.500px solid transparent;
        border-bottom: 0;
        margin-right: 6px;
    }
    .iconbox {
        background: #4a4a4a;
        border-radius: 3px;
        width: 13px;
        height: 12px;
        display: flex;
        align-items: center;
        justify-content: center;
        flex: none;
    }
    .iconbox.small { margin: 0 -1px; }
    .name {
        margin-left: 3px;
        font-family: "Noto Sans", sans-serif;
        font-size: 8px;
        color: #a8a8a8;
    }
    .collection .name { flex: 1; }
    .rowcheck {
        width: 8px;
        height: 8px;
        background: #ddd;
        border-radius: 1px;
        margin-right: 4px;
    }
    .rowicon { width: 11px; height: 11px; margin-left: 3px; flex: none; }
    .rows-child {
        border-left: 1px solid #4a4a4a;
        margin-left: 16px;
    }
    .obj { padding-left: 11px; }
    .obj > .ico12 { flex: none; }
    .obj .rowicon:nth-last-child(2) { margin-left: auto; }
    .databox {
        margin-left: 10px;
        width: 13px;
        height: 13px;
        display: flex;
        align-items: center;
        justify-content: center;
        border-radius: 3px;
    }
    .camdata { background: #4d4d4d; }
    .cubedata { background: #3d3d3d; margin-left: 10px; }
    .lightdata { margin-left: 10px; }

    .props {
        margin-top: 3px;
        height: 358px;
        flex: none;
        background: #292929;
        border-radius: 4px;
        overflow: hidden;
    }
    .phead {
        height: 20px;
        background: #2a2a2a;
        display: flex;
        align-items: center;
        padding-left: 5px;
    }
    .phead .ico14 { width: 12px; height: 12px; }
    .psearch { width: 75px; margin-left: 20px; }
    .pdrop { margin-left: auto; margin-right: 6px; background: #262626; width: 9px; height: 12px; border-radius: 2px; justify-content: center; }
    .pbody {
        display: flex;
        height: 338px;
    }
    .ptabs {
        width: 18px;
        flex: none;
        background: #1e1e1e;
        margin-left: 2px;
        display: flex;
        flex-direction: column;
        align-items: center;
    }
    .ptab {
        width: 18px;
        height: 18.600px;
        flex: none;
        display: flex;
        align-items: center;
        justify-content: center;
    }
    .ptab svg { width: 11px; height: 11px; }
    .t-tool { margin-top: 3px; }
    .t-render { height: 18px; margin-top: 8px; }
    .t-out { height: 15px; }
    .t-vl { height: 20px; }
    .t-coll { margin-top: 5px; }
    .t-obj { background: #303030; border-radius: 3px 0 0 3px; margin-top: 4px; height: 21px; }
    .pmain {
        flex: 1;
        background: #303030;
        padding: 0 5px;
        min-width: 0;
        overflow: hidden;
    }
    .crumb {
        height: 19px;
        display: flex;
        align-items: center;
        gap: 6px;
        margin-bottom: 9px;
        font-family: "Noto Sans", sans-serif;
        font-size: 8px;
    }
    .crumbpin { margin-left: auto; margin-right: 0; }
    .namefield {
        height: 12px;
        background: #1d1d1d;
        border-radius: 3px;
    }
    .panel {
        background: #3a3a3a;
        border-radius: 3px;
        margin-top: 8px;
    }
    .grip-row {
        height: 21px;
        display: flex;
        justify-content: flex-end;
        align-items: center;
        padding-right: 5px;
    }
    .grip {
        width: 8px;
        height: 4px;
        background-image: radial-gradient(#888 0.6px, transparent 0.8px);
        background-size: 2px 2px;
        flex: none;
        display: block;
    }
    .fgroup { margin-bottom: 3px; }
    .frow {
        height: 13.400px;
        display: flex;
        align-items: center;
        padding-right: 7px;
    }
    .flabel {
        width: 53px;
        text-align: right;
        flex: none;
        padding-right: 5px;
        box-sizing: border-box;
        white-space: nowrap;
        color: #b4b4b4;
    }
    .frow .field {
        width: 57px;
        height: 12.600px;
        flex: none;
        color: #bdbdbd;
        font-size: 8px;
    }
    .lock { width: 10px; height: 10px; margin-left: 2px; }
    .lockgap { width: 12px; flex: none; }
    .dot {
        width: 2.500px;
        height: 2.500px;
        background: #d0d0d0;
        border-radius: 50%;
        margin-left: auto;
    }
    .rotmode {
        width: 57px;
        height: 13px;
        padding: 0 3px;
        font-size: 7.500px;
        gap: 1px;
        background: #262626;
    }
    .delta {
        height: 16px;
        padding-top: 3px;
        display: flex;
        align-items: center;
        padding-left: 14px;
        gap: 3px;
    }
    .pchev { width: 7px; height: 7px; }
    .closed {
        height: 15.500px;
        margin-top: 2px;
        display: flex;
        align-items: center;
        padding: 0 5px 0 6px;
        gap: 3px;
        white-space: nowrap;
    }

    .status {
        height: 15px;
        flex: none;
        position: relative;
        background: #181818;
        color: #8f8f8f;
    }
    .hint {
        position: absolute;
        top: 1px;
        display: flex;
        align-items: center;
        gap: 8px;
        height: 14px;
    }
    .hint svg { width: 8px; height: 11px; }
    .hint.first { left: 8px; }
    .hint.second { left: 157px; }
    .hint.third { left: 307px; }
    .version {
        position: absolute;
        right: 9px;
        top: 4px;
        font-family: "Noto Sans", sans-serif;
        font-size: 8px;
        color: #888;
    }

    .tooltip {
        position: absolute;
        left: 39px;
        top: 72px;
        width: 124px;
        height: 21px;
        background: #1b1b1b;
        border-radius: 3px;
        color: #b4b4b4;
        display: flex;
        align-items: center;
        padding-left: 8px;
        box-sizing: border-box;
        white-space: nowrap;
    }

    .redbox {
        position: absolute;
        left: 0;
        top: 46px;
        width: 87px;
        height: 26px;
        border: 3px solid #ee1c25;
        box-sizing: border-box;
    }
    .redmarks {
        position: absolute;
        left: 0;
        top: 0;
        width: 1024px;
        height: 576px;
        pointer-events: none;
    }
    .note {
        position: absolute;
        background: #fff;
        color: #111;
        font-family: "Noto Sans CJK JP", sans-serif;
        font-weight: 500;
        font-size: 16.800px;
        line-height: 1;
        display: flex;
        align-items: center;
        white-space: nowrap;
        box-sizing: border-box;
    }
    .note-a {
        left: 18px;
        top: 100px;
        width: 363px;
        height: 39px;
        padding-left: 2px;
    }
    .note-b {
        left: 687px;
        top: 248px;
        width: 267px;
        height: 35px;
        padding-left: 2px;
        font-size: 17.200px;
    }
</style>
